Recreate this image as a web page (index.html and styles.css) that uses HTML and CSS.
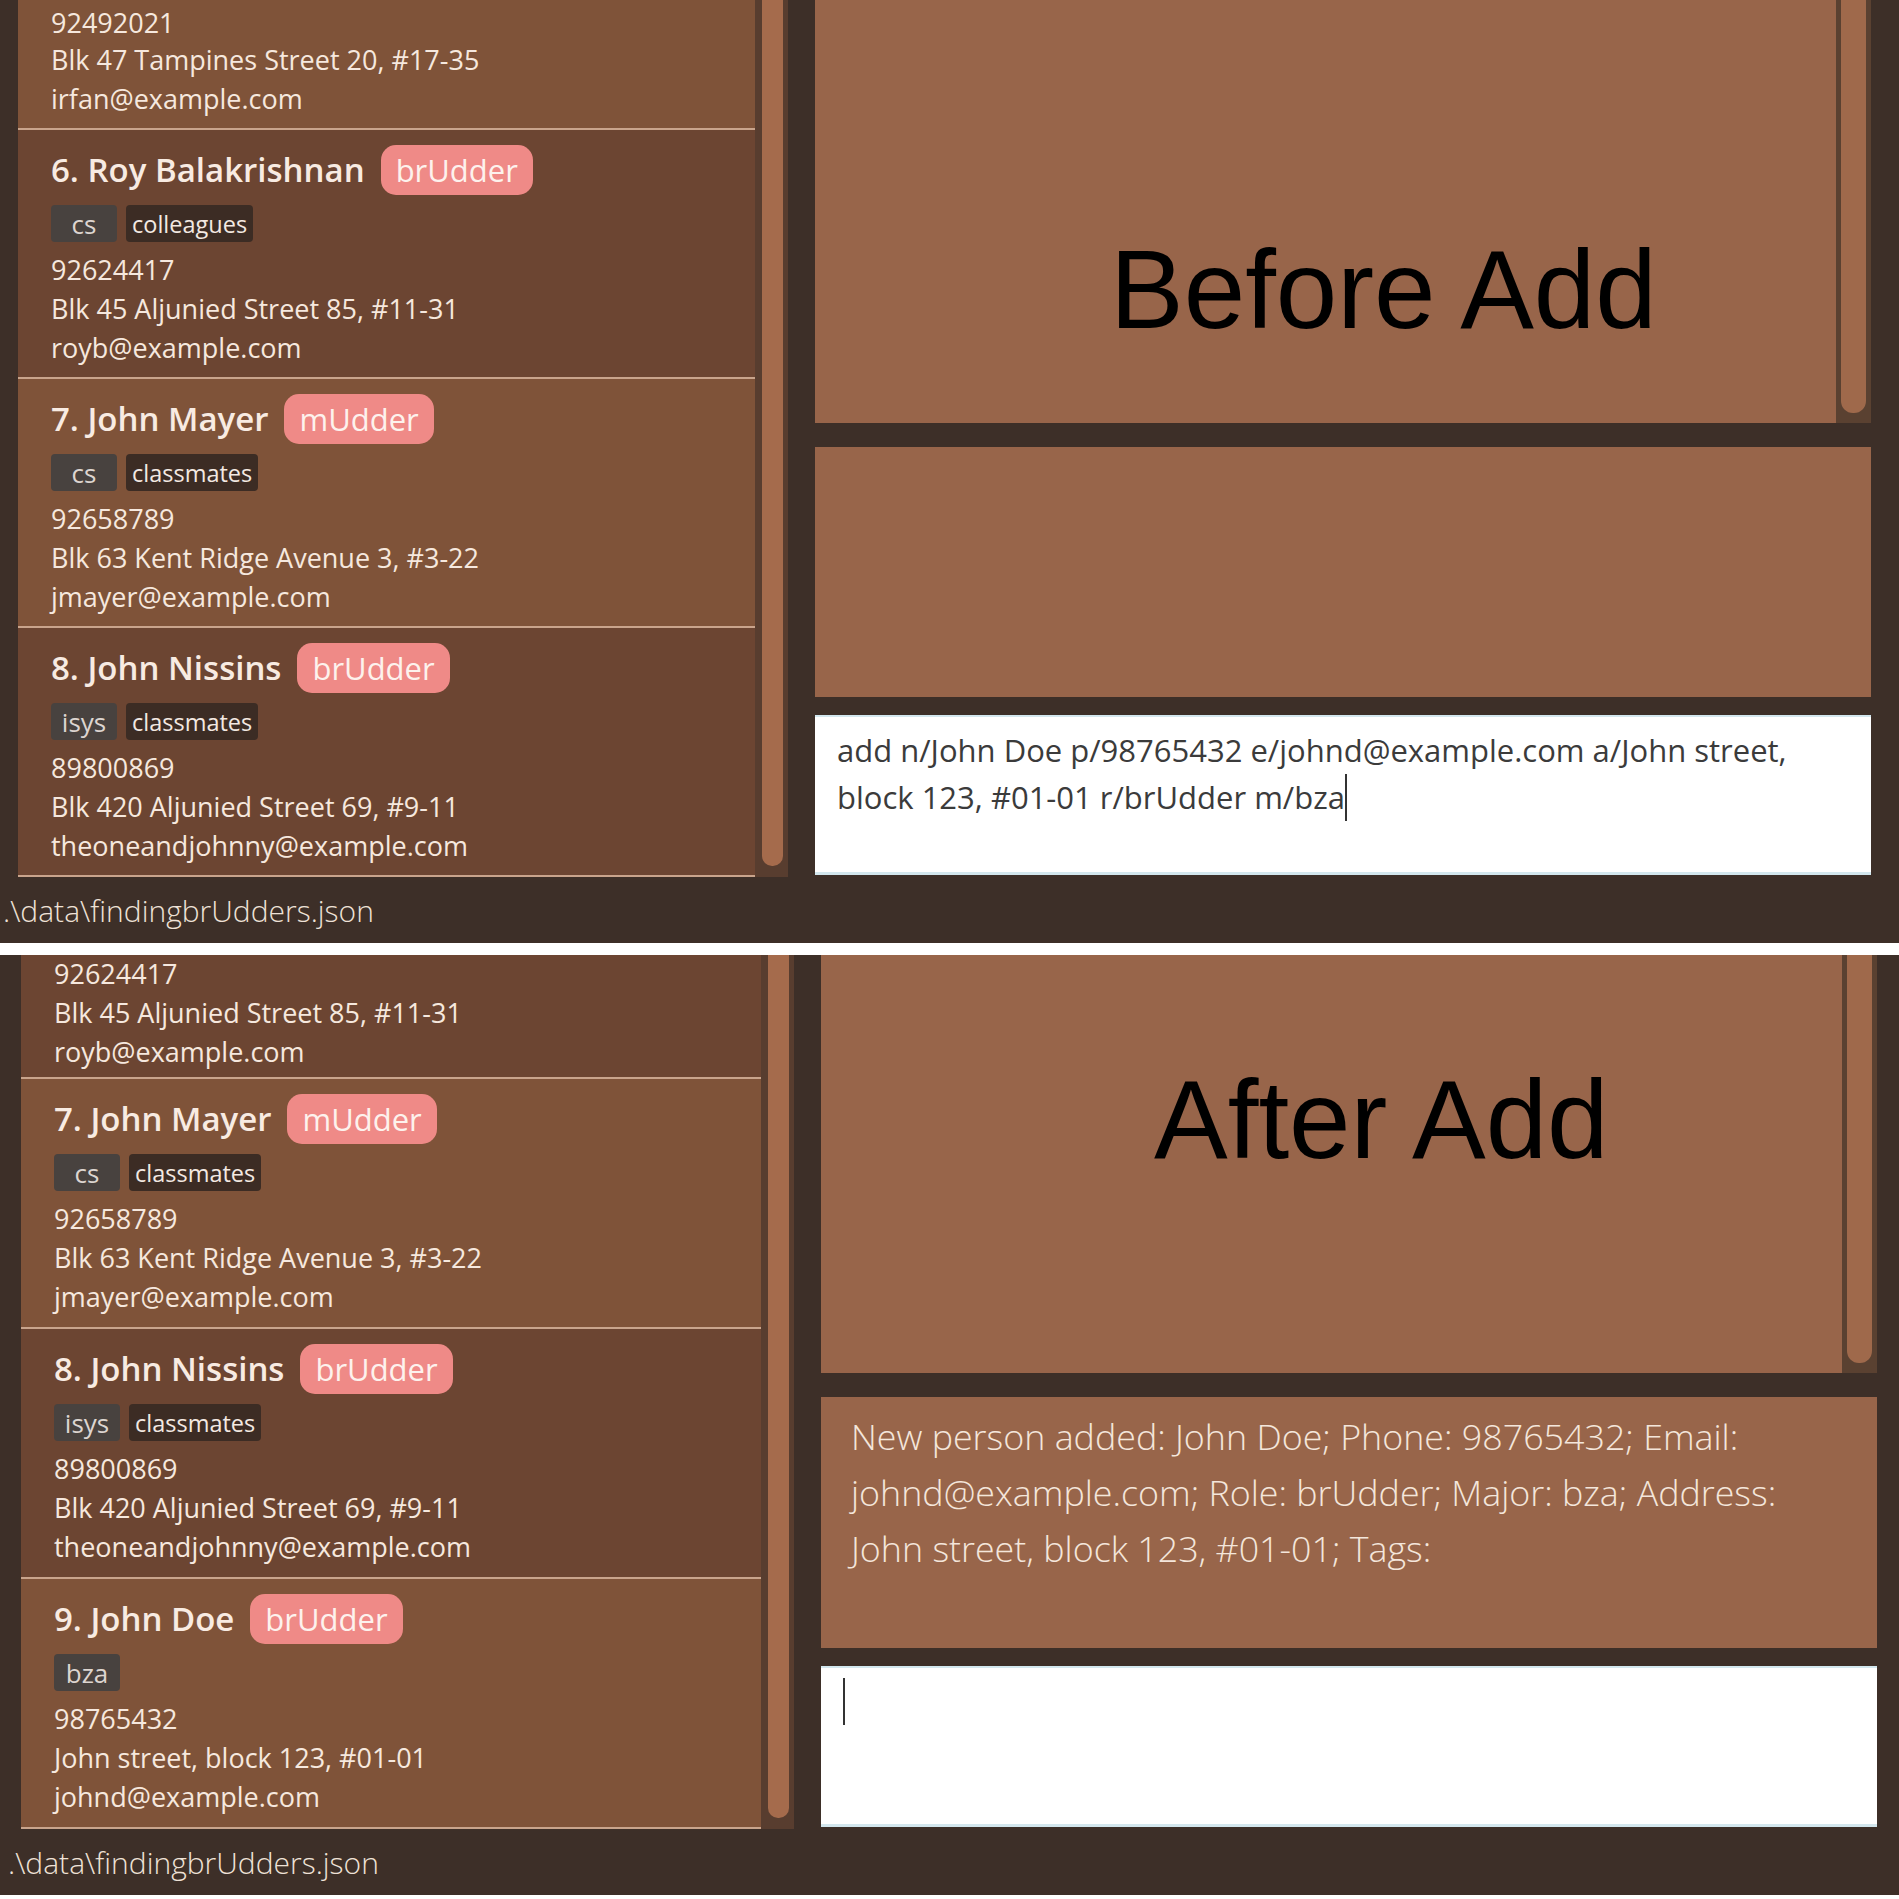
FILE: index.html
```html
<!DOCTYPE html>
<html lang="en">
<head>
<meta charset="utf-8">
<title>findingbrUdders - add command</title>
<link rel="stylesheet" href="styles.css">
</head>
<body>
<div class="shot">
  <section class="app app--before">
    <div class="main">
      <div class="list-pane">
        <div class="list">
          <div class="card card--light card--partial">
            <div class="details"><div>92492021</div><div>Blk 47 Tampines Street 20, #17-35</div><div>irfan@example.com</div></div>
          </div>
          <div class="card card--dark">
            <div class="card-head"><span class="card-name">6. Roy Balakrishnan</span><span class="badge">brUdder</span></div>
            <div class="tags"><span class="tag tag--major">cs</span><span class="tag tag--plain">colleagues</span></div>
            <div class="details"><div>92624417</div><div>Blk 45 Aljunied Street 85, #11-31</div><div>royb@example.com</div></div>
          </div>
          <div class="card card--light">
            <div class="card-head"><span class="card-name">7. John Mayer</span><span class="badge">mUdder</span></div>
            <div class="tags"><span class="tag tag--major">cs</span><span class="tag tag--plain">classmates</span></div>
            <div class="details"><div>92658789</div><div>Blk 63 Kent Ridge Avenue 3, #3-22</div><div>jmayer@example.com</div></div>
          </div>
          <div class="card card--dark">
            <div class="card-head"><span class="card-name">8. John Nissins</span><span class="badge">brUdder</span></div>
            <div class="tags"><span class="tag tag--major">isys</span><span class="tag tag--plain">classmates</span></div>
            <div class="details"><div>89800869</div><div>Blk 420 Aljunied Street 69, #9-11</div><div>theoneandjohnny@example.com</div></div>
          </div>
        </div>
        <div class="vscroll"><div class="vscroll-thumb"></div></div>
      </div>
      <div class="right-pane">
        <div class="display">
          <div class="display-box">
            <span class="annot annot--before">Before Add</span>
          </div>
          <div class="display-scroll"><div class="display-thumb"></div></div>
        </div>
        <div class="result"></div>
        <div class="command"><span class="cmd-line">add n/John Doe p/98765432 e/johnd@example.com a/John street,</span><br><span class="cmd-line">block 123, #01-01 r/brUdder m/bza</span><span class="caret"></span></div>
      </div>
    </div>
    <div class="status">.\data\findingbrUdders.json</div>
  </section>

  <div class="gap"></div>

  <section class="app app--after">
    <div class="main">
      <div class="list-pane">
        <div class="list">
          <div class="card card--dark card--partial">
            <div class="details"><div>92624417</div><div>Blk 45 Aljunied Street 85, #11-31</div><div>royb@example.com</div></div>
          </div>
          <div class="card card--light">
            <div class="card-head"><span class="card-name">7. John Mayer</span><span class="badge">mUdder</span></div>
            <div class="tags"><span class="tag tag--major">cs</span><span class="tag tag--plain">classmates</span></div>
            <div class="details"><div>92658789</div><div>Blk 63 Kent Ridge Avenue 3, #3-22</div><div>jmayer@example.com</div></div>
          </div>
          <div class="card card--dark">
            <div class="card-head"><span class="card-name">8. John Nissins</span><span class="badge">brUdder</span></div>
            <div class="tags"><span class="tag tag--major">isys</span><span class="tag tag--plain">classmates</span></div>
            <div class="details"><div>89800869</div><div>Blk 420 Aljunied Street 69, #9-11</div><div>theoneandjohnny@example.com</div></div>
          </div>
          <div class="card card--light">
            <div class="card-head"><span class="card-name">9. John Doe</span><span class="badge">brUdder</span></div>
            <div class="tags"><span class="tag tag--major">bza</span></div>
            <div class="details"><div>98765432</div><div>John street, block 123, #01-01</div><div>johnd@example.com</div></div>
          </div>
        </div>
        <div class="vscroll"><div class="vscroll-thumb"></div></div>
      </div>
      <div class="right-pane">
        <div class="display">
          <div class="display-box">
            <span class="annot annot--after">After Add</span>
          </div>
          <div class="display-scroll"><div class="display-thumb"></div></div>
        </div>
        <div class="result"><span class="res-line">New person added: John Doe; Phone: 98765432; Email:</span><br><span class="res-line">johnd@example.com; Role: brUdder; Major: bza; Address:</span><br><span class="res-line">John street, block 123, #01-01; Tags:</span></div>
        <div class="command"><span class="caret"></span></div>
      </div>
    </div>
    <div class="status">.\data\findingbrUdders.json</div>
  </section>
</div>
</body>
</html>
```

FILE: styles.css
```css
* { box-sizing: border-box; }
html, body { margin: 0; padding: 0; background: #ffffff; }
body {
  width: 1899px;
  height: 1899px;
  overflow: hidden;
  font-family: "Open Sans", "Noto Sans", sans-serif;
}
.shot { display: flex; flex-direction: column; }

.app {
  --pl: 18px;
  --cards: 737px;
  --scroll: 33px;
  --sp: 27px;
  --pr: 28px;
  --res: 250px;
  --cmd: 160px;
  --card-h: 249px;
  --status-pl: 3px;
  --partial-pb: 10px;
  --partial-first: 34px;
  background: #3d2f28;
  display: flex;
  flex-direction: column;
}
.app--before { height: 943px; }
.app--after {
  height: 940px;
  --pl: 21px;
  --cards: 740px;
  --pr: 22px;
  --res: 251px;
  --cmd: 161px;
  --card-h: 250px;
  --status-pl: 8px;
  --partial-pb: 6px;
  --partial-first: 38px;
}
.gap { height: 12px; background: #ffffff; }

.main {
  flex: 1;
  min-height: 0;
  display: flex;
  padding-left: var(--pl);
  padding-right: var(--pr);
}

/* person list */
.list-pane {
  display: flex;
  width: calc(var(--cards) + var(--scroll));
  margin-right: var(--sp);
}
.list {
  width: var(--cards);
  display: flex;
  flex-direction: column;
  justify-content: flex-end;
  overflow: hidden;
}
.card {
  flex-shrink: 0;
  height: var(--card-h);
  padding: 15px 0 0 33px;
  border-bottom: 2px solid #c9a48c;
  display: flex;
  flex-direction: column;
}
.card--partial {
  flex: 1;
  height: auto;
  padding-top: 0;
  padding-bottom: var(--partial-pb);
  justify-content: flex-end;
}
.card--partial .details { margin-top: 0; }
.card--partial .details > div:first-child { line-height: var(--partial-first); }
.card--light { background: #7f5339; }
.card--dark { background: #6c4532; }
.card-head {
  height: 50px;
  display: flex;
  align-items: center;
  gap: 16px;
}
.card-name {
  font-weight: 600;
  font-size: 33px;
  line-height: 44px;
  color: #f8ebe2;
  white-space: nowrap;
}
.badge {
  height: 50px;
  padding: 0 15px;
  border-radius: 15px;
  background: #ef8a87;
  color: #fdf2ed;
  font-size: 31px;
  font-weight: 500;
  display: flex;
  align-items: center;
  white-space: nowrap;
}
.tags {
  margin-top: 10px;
  height: 37px;
  display: flex;
  gap: 9px;
}
.tag {
  height: 37px;
  border-radius: 4px;
  display: flex;
  align-items: center;
  justify-content: center;
  padding: 0 6px;
  font-size: 23.5px;
  line-height: 30px;
  color: #f3e9e2;
}
.tag--major {
  min-width: 66px;
  background: #48423f;
  color: #ddd5d0;
  font-size: 26px;
}
.tag--plain { background: #3c2c24; }
.details {
  margin-top: 8px;
  font-size: 27px;
  line-height: 39px;
  color: #f6e8de;
  white-space: nowrap;
}

.vscroll {
  width: var(--scroll);
  background: #583d2f;
  padding: 0 5px 11px 7px;
  display: flex;
  flex-direction: column;
}
.vscroll-thumb {
  flex: 1;
  background: #a56b4c;
  border-radius: 0 0 10px 10px;
}

/* right side */
.right-pane {
  flex: 1;
  min-width: 0;
  display: flex;
  flex-direction: column;
  padding-bottom: 2px;
}
.display {
  flex: 1;
  min-height: 0;
  display: flex;
}
.display-box {
  flex: 1;
  position: relative;
  background: #98654a;
}
.display-scroll {
  width: 35px;
  background: #5a4131;
  padding: 0 5px 10px;
  display: flex;
  flex-direction: column;
}
.display-thumb {
  flex: 1;
  background: #9f694b;
  border-radius: 0 0 12px 12px;
}
.annot {
  position: absolute;
  font-family: "Liberation Sans", Arial, sans-serif;
  font-size: 110.5px;
  line-height: 1;
  color: #000000;
  white-space: nowrap;
}
.annot--before { left: 295px; top: 235px; }
.annot--after { left: 333px; top: 110px; }

.result {
  height: var(--res);
  margin-top: 24px;
  background: #98654a;
  padding: 11px 30px;
  font-weight: 300;
  font-size: 35.8px;
  line-height: 56px;
  color: #f4e6db;
  white-space: nowrap;
}
.command {
  height: var(--cmd);
  margin-top: 18px;
  background: #ffffff;
  border-top: 2px solid #d3e7ee;
  border-bottom: 3px solid #d3e7ee;
  padding: 10px 22px;
  font-size: 31px;
  line-height: 47px;
  color: #3b3b3b;
  white-space: nowrap;
}
.caret {
  display: inline-block;
  width: 2px;
  height: 47px;
  background: #333333;
  vertical-align: top;
}

.status {
  height: 66px;
  flex-shrink: 0;
  display: flex;
  align-items: center;
  padding-left: var(--status-pl);
  font-weight: 300;
  font-size: 30px;
  color: #efe2d7;
  white-space: nowrap;
}
```
